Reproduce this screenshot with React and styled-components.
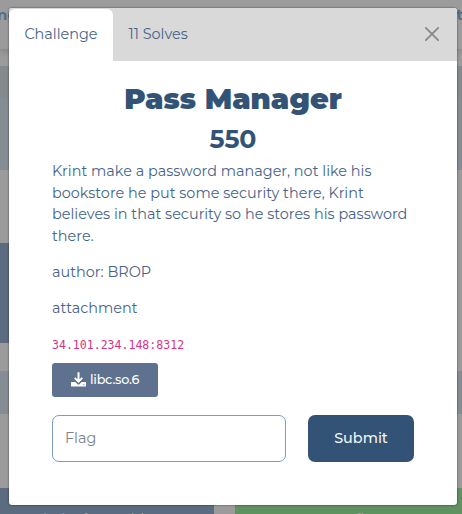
import React from "react";
import styled, { createGlobalStyle } from "styled-components";

const GlobalStyle = createGlobalStyle`
  *, *::before, *::after { box-sizing: border-box; }
  body {
    margin: 0;
    overflow: hidden;
    background: #9b9b9b;
    color: #466488;
    font-family: Montserrat, sans-serif;
    font-size: 14.4px;
  }
  p, h1, h2 { margin: 0; }
`;

const Page = styled.div`
  position: relative;
  width: 462px;
  height: 514px;
  overflow: hidden;
`;

const Backdrop = styled.div`
  display: flex;
  flex-direction: column;
  height: 100%;
`;

const Navbar = styled.div`
  display: flex;
  justify-content: space-between;
  height: 49px;
  flex: none;
  padding: 5px 0 0;
  background: #9b9b9b;
  box-shadow: 0 2px 7px rgba(0, 0, 0, 0.18);
  color: #566d86;
  font-size: 15px;
  font-weight: 700;
  line-height: 19px;
  z-index: 1;
`;

const NavItem = styled.span`
  margin: 0 ${(p) => p.$right || 0}px 0 ${(p) => p.$left || 0}px;
`;

const Band = styled.div`
  display: flex;
  flex: none;
  height: ${(p) => p.$height}px;
  background: ${(p) => p.$fill || "#9b9b9b"};
`;

const Tile = styled.div`
  flex: none;
  width: ${(p) => p.$width}px;
  padding: ${(p) => p.$top || 0}px 0 0 ${(p) => p.$indent || 0}px;
  margin-right: ${(p) => p.$gap || 0}px;
  background: ${(p) => p.$fill};
  color: #a0a4a8;
  font-size: 14.4px;
  line-height: 18px;
  white-space: nowrap;
  overflow: hidden;
`;

const Dialog = styled.section`
  position: absolute;
  left: 9px;
  top: 8px;
  width: 448px;
  height: 497px;
  background: #fff;
  border-radius: 3px;
  box-shadow: 0 0 2px rgba(0, 0, 0, 0.65);
  z-index: 2;
`;

const Header = styled.header`
  display: flex;
  height: 53px;
  background: #d9d9d9;
  border-radius: 3px 3px 0 0;
`;

const Tab = styled.button`
  width: ${(p) => p.$width}px;
  margin: 1px 0 0;
  padding: 0 0 2px ${(p) => (p.$active ? 15.4 : 16)}px;
  border: 0;
  border-radius: 6px 6px 0 0;
  background: ${(p) => (p.$active ? "#fff" : "transparent")};
  color: #466488;
  font: inherit;
  text-align: left;
  white-space: nowrap;
`;

const Close = styled.button`
  display: flex;
  margin: 19px 18px 0 auto;
  width: 14px;
  height: 14px;
  padding: 0;
  border: 0;
  background: none;
`;

const Body = styled.div`
  display: flex;
  flex-direction: column;
  padding: 0 43px;
`;

const Title = styled.h1`
  margin-top: 20px;
  color: #325376;
  font-size: 28.8px;
  font-weight: 900;
  line-height: 36px;
  text-align: center;
  white-space: nowrap;
`;

const Score = styled.h2`
  margin-top: 6px;
  color: #325376;
  font-size: 25.2px;
  font-weight: 700;
  line-height: 32px;
  text-align: center;
`;

const Copy = styled.p`
  margin-top: ${(p) => p.$top}px;
  line-height: 21.6px;
`;

const Line = styled.span`
  display: block;
  white-space: nowrap;
  letter-spacing: 0.015px;
`;

const Address = styled.code`
  margin-top: 18px;
  color: #d63384;
  font-family: Consolas, "DejaVu Sans Mono", monospace;
  font-size: 11.55px;
  line-height: 16px;
`;

const Download = styled.button`
  display: flex;
  align-items: center;
  gap: 4px;
  width: 106px;
  height: 34px;
  margin-top: 10px;
  padding: 0 0 1px 19px;
  border: 0;
  border-radius: 3px;
  background: #5e728f;
  color: #fff;
  font: 500 12.8px Montserrat, sans-serif;
  letter-spacing: -0.25px;
  white-space: nowrap;
`;

const Form = styled.form`
  display: flex;
  gap: 22px;
  margin-top: 18px;
`;

const FlagInput = styled.input`
  width: 234px;
  height: 47px;
  padding: 0 12px 1px;
  border: 1px solid #7b9cc6;
  border-radius: 7px;
  background: #fff;
  font: 400 14.4px Montserrat, sans-serif;
  &::placeholder { color: #7c828a; opacity: 1; }
`;

const Submit = styled.button`
  width: 106px;
  height: 47px;
  padding: 0 0 1px;
  border: 0;
  border-radius: 7px;
  background: #325376;
  color: #f4f6f8;
  font: 500 14.4px Montserrat, sans-serif;
`;

const DownloadIcon = () => (
  <svg width="15" height="15" viewBox="0 0 15 15" fill="none" aria-hidden="true">
    <path d="M.6 10h3.800l1.900 1.900q1.200 1 2.400 0L10.600 10h3.800q.6 0 .6.6v3.400q0 .6-.6.6H.6q-.6 0-.6-.6v-3.400q0-.6.6-.6zM12.400 12.300v1h1v-1z" fill="currentColor" fillRule="evenodd" />
    <path d="M7.500.2V9.400M3.700 5.900l3.800 3.700 3.800-3.700" stroke="currentColor" strokeWidth="2" />
  </svg>
);

const CloseIcon = () => (
  <svg width="14" height="14" viewBox="0 0 14 14" fill="none" stroke="#868686" strokeWidth="1.7" strokeLinecap="round" aria-hidden="true">
    <path d="M.8.8l12.400 12.400M13.200.8L.8 13.200" />
  </svg>
);

export default function App() {
  return (
    <Page>
      <GlobalStyle />
      <Backdrop>
        <Navbar>
          <NavItem $left={-3}>ng</NavItem>
          <NavItem $right={-1}>t</NavItem>
        </Navbar>
        <Band $height={17} />
        <Band $height={32} $fill="#858b8d" />
        <Band $height={72} $fill="#868c94" />
        <Band $height={73} />
        <Band $height={100}>
          <Tile $width={214} $fill="#5b6b80" />
        </Band>
        <Band $height={28} />
        <Band $height={43} $fill="#868c94" />
        <Band $height={74} />
        <Band $height={26}>
          <Tile $width={214} $gap={21} $top={22} $indent={43} $fill="#5b6b80">baby fmtstr bin</Tile>
          <Tile $width={227} $top={22} $indent={112} $fill="#5f9161">afl</Tile>
        </Band>
      </Backdrop>
      <Dialog role="dialog">
        <Header>
          <Tab $active $width={103.5}>Challenge</Tab>
          <Tab $width={91}>11 Solves</Tab>
          <Close aria-label="Close"><CloseIcon /></Close>
        </Header>
        <Body>
          <Title>Pass Manager</Title>
          <Score>550</Score>
          <Copy $top={6}>
            <Line>Krint make a password manager, not like his</Line>
            <Line>bookstore he put some security there, Krint</Line>
            <Line>believes in that security so he stores his password</Line>
            <Line>there.</Line>
          </Copy>
          <Copy $top={14.4}><Line>author: BROP</Line></Copy>
          <Copy $top={14.4}><Line>attachment</Line></Copy>
          <Address>34.101.234.148:8312</Address>
          <Download><DownloadIcon />libc.so.6</Download>
          <Form onSubmit={(e) => e.preventDefault()}>
            <FlagInput placeholder="Flag" aria-label="Flag" />
            <Submit>Submit</Submit>
          </Form>
        </Body>
      </Dialog>
    </Page>
  );
}
